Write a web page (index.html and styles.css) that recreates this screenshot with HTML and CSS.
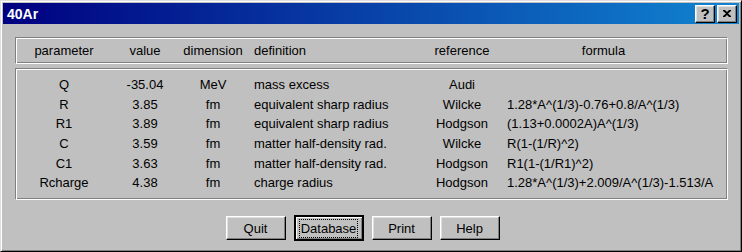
FILE: index.html
```html
<!DOCTYPE html>
<html lang="en">
<head>
  <meta charset="UTF-8" />
  <title>40Ar</title>
  <link rel="stylesheet" href="styles.css">
</head>
<body>
  <div class="window">
    <div class="titlebar">
      <span class="title">40Ar</span>
      <div class="title-buttons">
        <button class="tbtn">?</button>
        <button class="tbtn">
          <svg width="8" height="7" viewBox="0 0 8 7"><path d="M0 0h2l2 2 2-2h2v1L5 3.5 8 6v1H6L4 5 2 7H0V6l3-2.5L0 1z" fill="#000"/></svg>
        </button>
      </div>
    </div>

    <div class="box head">
      <div class="c-param">parameter</div>
      <div class="c-value">value</div>
      <div class="c-dim">dimension</div>
      <div class="c-def">definition</div>
      <div class="c-ref">reference</div>
      <div class="c-form">formula</div>
    </div>

    <div class="box data">
      <div class="row">
        <div class="c-param">Q</div><div class="c-value">-35.04</div><div class="c-dim">MeV</div>
        <div class="c-def">mass excess</div><div class="c-ref">Audi</div><div class="c-form"></div>
      </div>
      <div class="row">
        <div class="c-param">R</div><div class="c-value">3.85</div><div class="c-dim">fm</div>
        <div class="c-def">equivalent sharp radius</div><div class="c-ref">Wilcke</div><div class="c-form">1.28*A^(1/3)-0.76+0.8/A^(1/3)</div>
      </div>
      <div class="row">
        <div class="c-param">R1</div><div class="c-value">3.89</div><div class="c-dim">fm</div>
        <div class="c-def">equivalent sharp radius</div><div class="c-ref">Hodgson</div><div class="c-form">(1.13+0.0002A)A^(1/3)</div>
      </div>
      <div class="row">
        <div class="c-param">C</div><div class="c-value">3.59</div><div class="c-dim">fm</div>
        <div class="c-def">matter half-density rad.</div><div class="c-ref">Wilcke</div><div class="c-form">R(1-(1/R)^2)</div>
      </div>
      <div class="row">
        <div class="c-param">C1</div><div class="c-value">3.63</div><div class="c-dim">fm</div>
        <div class="c-def">matter half-density rad.</div><div class="c-ref">Hodgson</div><div class="c-form">R1(1-(1/R1)^2)</div>
      </div>
      <div class="row">
        <div class="c-param">Rcharge</div><div class="c-value">4.38</div><div class="c-dim">fm</div>
        <div class="c-def">charge radius</div><div class="c-ref">Hodgson</div><div class="c-form">1.28*A^(1/3)+2.009/A^(1/3)-1.513/A</div>
      </div>
    </div>

    <div class="actions">
      <button class="btn">Quit</button>
      <button class="btn default"><span class="focus">Database</span></button>
      <button class="btn">Print</button>
      <button class="btn">Help</button>
    </div>
  </div>
</body>
</html>
```

FILE: styles.css
```css
html, body {
  margin: 0;
  padding: 0;
  background: #c0c0c0;
}
body {
  font-family: "Liberation Sans", Arial, sans-serif;
  font-size: 13px;
  color: #000;
}
.window {
  width: 742px;
  height: 252px;
  box-sizing: border-box;
  border: 1px solid;
  border-color: #dfdfdf #000 #000 #dfdfdf;
  box-shadow: inset 1px 1px #fff, inset -1px -1px #808080;
  padding: 2px;
  display: flex;
  flex-direction: column;
}
.titlebar {
  height: 21px;
  background: linear-gradient(to right, #000080, #1084d0);
  display: flex;
  align-items: center;
  justify-content: space-between;
  padding: 0 2px 0 4px;
}
.title {
  color: #fff;
  font-weight: bold;
  font-size: 14px;
}
.title-buttons {
  display: flex;
  gap: 2px;
}
.tbtn {
  width: 20px;
  height: 18px;
  padding: 0;
  margin: 0;
  background: #c0c0c0;
  border: 1px solid;
  border-color: #fff #000 #000 #fff;
  box-shadow: inset -1px -1px #808080, inset 1px 1px #dfdfdf;
  font: bold 15px "Liberation Sans", Arial, sans-serif;
  line-height: 14px;
  display: flex;
  align-items: center;
  justify-content: center;
}
.box {
  margin: 0 11px 0 12px;
  border: 1px solid;
  border-color: #808080 #fff #fff #808080;
  box-shadow: inset 1px 1px #fff, inset -1px -1px #808080;
  display: grid;
}
.head {
  margin-top: 13px;
  height: 27px;
  box-sizing: border-box;
  grid-template-columns: 96px 66px 70px 174px 80px 1fr;
  align-items: center;
}
.data {
  margin-top: 4px;
  height: 132px;
  box-sizing: border-box;
  padding: 6px 0 0;
  align-content: start;
}
.row {
  display: grid;
  grid-template-columns: 96px 66px 70px 174px 80px 1fr;
  height: 19.6px;
  align-items: center;
  white-space: nowrap;
}
.c-param, .c-value, .c-dim, .c-ref {
  text-align: center;
}
.c-def {
  padding-left: 6px;
}
.c-form {
  padding-left: 5px;
}
.head .c-form {
  text-align: center;
  padding: 0 22px 0 0;
}
.actions {
  margin-top: 16px;
  display: flex;
  justify-content: center;
  gap: 8px;
  padding-right: 17px;
}
.btn {
  width: 60px;
  height: 24px;
  padding: 0;
  background: #c0c0c0;
  border: 1px solid;
  border-color: #fff #000 #000 #fff;
  box-shadow: inset -1px -1px #808080, inset 1px 1px #dfdfdf;
  font: 13px "Liberation Sans", Arial, sans-serif;
  color: #000;
}
.btn.default {
  width: 70px;
  border: 2px solid #000;
  box-shadow: inset 1px 1px #fff, inset -1px -1px #808080;
  margin: -1px 0;
  height: 26px;
}
.focus {
  outline: 1px dotted #000;
  padding: 1px 1px;
}
```
